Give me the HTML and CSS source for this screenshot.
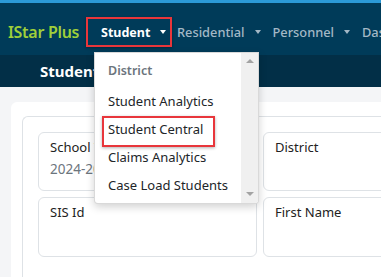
FILE: index.html
```html
<!DOCTYPE html>
<html>
<head>
<meta charset="utf-8">
<link rel="stylesheet" href="styles.css">
</head>
<body>
<div class="topstrip"></div>
<nav class="navbar">
  <span class="brand">IStar Plus</span>
  <span class="nav-item active">Student <i class="caret"></i></span>
  <span class="nav-item">Residential <i class="caret"></i></span>
  <span class="nav-item">Personnel <i class="caret"></i></span>
  <span class="nav-item">Dashboard <i class="caret"></i></span>
</nav>
<div class="subbar"><span class="subtitle">Student Central</span></div>
<main class="main">
  <section class="card">
    <div class="inner">
      <div class="fields">
        <div class="field"><div class="label">School Year</div><div class="value">2024-2025</div></div>
        <div class="field"><div class="label">District</div><div class="value"></div></div>
        <div class="field"><div class="label">SIS Id</div></div>
        <div class="field"><div class="label">First Name</div></div>
      </div>
    </div>
  </section>
</main>
<div class="dropdown">
  <div class="menu">
    <div class="menu-header">District</div>
    <div class="menu-item">Student Analytics</div>
    <div class="menu-item highlight">Student Central</div>
    <div class="menu-item">Claims Analytics</div>
    <div class="menu-item">Case Load Students</div>
  </div>
  <div class="scrollbar">
    <i class="arrow up"></i>
    <i class="arrow down"></i>
  </div>
</div>
</body>
</html>
```
FILE: styles.css
```css
* { box-sizing: border-box; }
html, body { margin: 0; padding: 0; }
body {
  font-family: "Noto Sans", "Open Sans", sans-serif;
  width: 381px;
  height: 277px;
  overflow: hidden;
  position: relative;
  background: #f4f5f7;
  color: #212529;
}
.topstrip { height: 3px; background: #2b9ad8; }
.navbar {
  height: 52px;
  background: #003b59;
  display: flex;
  align-items: center;
  padding: 6px 0 0 8px;
  white-space: nowrap;
  overflow: hidden;
}
.brand {
  color: #9fcf3a;
  font-size: 16px;
  font-weight: 600;
  margin-right: 6px;
  letter-spacing: -0.3px;
  width: 72px;
  flex: none;
}
.nav-item {
  display: flex;
  align-items: center;
  flex: none;
  color: #a3b8c6;
  font-size: 12.8px;
  font-weight: 500;
  padding: 0 7px 0 5px;
  height: 30px;
}
.nav-item.active {
  color: #fff;
  font-weight: 700;
  font-size: 12.5px;
  border: 2px solid #e8363b;
  padding: 0 5px 0 13px;
  width: 86px;
  justify-content: space-between;
  box-shadow: 0 1px 3px rgba(0,0,0,.3);
}
.caret {
  display: inline-block;
  width: 0; height: 0;
  border-left: 3.5px solid transparent;
  border-right: 3.5px solid transparent;
  border-top: 4px solid currentColor;
  margin-left: 10px;
}
.subbar {
  height: 32px;
  background: #022f47;
  display: flex;
  align-items: center;
  padding-left: 40px;
}
.subtitle { color: #fff; font-weight: 700; font-size: 15px; white-space: nowrap; }
.main { padding: 15px 0 0 11px; }
.card {
  background: #fff;
  border-radius: 6px 0 0 0;
  padding: 14px 0 0 11px;
  height: 200px;
}
.inner {
  border: 1px solid #dee2e6;
  border-right: none;
  border-bottom: none;
  border-radius: 6px 0 0 0;
  padding: 15px 0 0 15px;
  height: 200px;
}
.fields {
  display: grid;
  grid-template-columns: 219px 219px;
  grid-template-rows: 59px 60px;
  gap: 6px;
}
.field {
  border: 1px solid #dee2e6;
  border-radius: 6px;
  padding: 5px 11px;
}
.label { font-size: 13px; color: #222; line-height: 18px; white-space: nowrap; }
.value { font-size: 13.5px; color: #6c757d; line-height: 20px; margin-top: 3px; }
.dropdown {
  position: absolute;
  left: 94px;
  top: 52px;
  width: 165px;
  height: 152px;
  background: #fff;
  border: 1px solid rgba(0,0,0,.15);
  border-radius: 0 0 4px 4px;
  box-shadow: 0 3px 8px rgba(0,0,0,.18);
  display: flex;
  overflow: hidden;
}
.menu { flex: 1; padding-top: 8px; }
.menu-header {
  font-size: 12.5px;
  font-weight: 600;
  color: #6c757d;
  padding-left: 13px;
  height: 20px;
  line-height: 20px;
  margin-bottom: 6px;
}
.menu-item {
  position: relative;
  font-size: 13px;
  color: #212529;
  padding-left: 13px;
  height: 28px;
  line-height: 28px;
  white-space: nowrap;
}
.highlight::after {
  content: "";
  position: absolute;
  left: 7px;
  top: 1px;
  width: 109px;
  height: 27px;
  border: 2px solid #e8363b;
  box-shadow: 0 1px 3px rgba(0,0,0,.3);
}
.scrollbar {
  width: 17px;
  background: #f0f0f0;
  display: flex;
  flex-direction: column;
  justify-content: space-between;
  align-items: center;
  padding: 6px 0 7px;
}
.arrow { width: 0; height: 0; border-left: 4px solid transparent; border-right: 4px solid transparent; }
.arrow.up { border-bottom: 4px solid #a3a3a3; }
.arrow.down { border-top: 4px solid #a3a3a3; }
```
